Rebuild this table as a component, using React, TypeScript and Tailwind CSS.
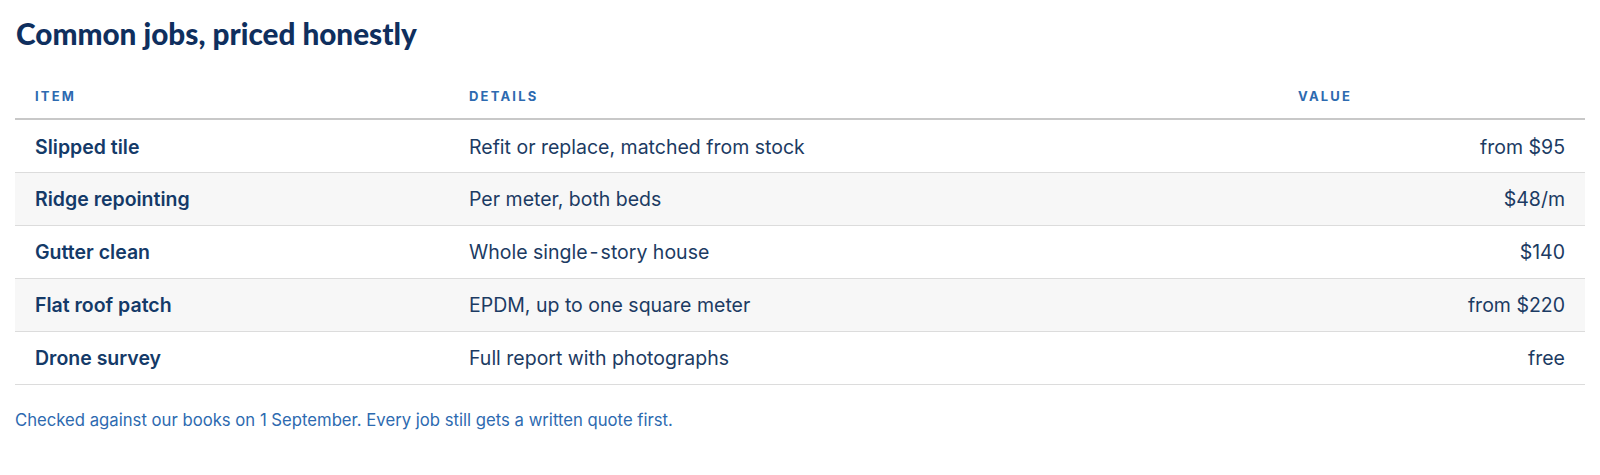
import React from "react";

const rows: { item: string; details: React.ReactNode; value: string }[] = [
  { item: "Slipped tile", details: "Refit or replace, matched from stock", value: "from $95" },
  { item: "Ridge repointing", details: "Per meter, both beds", value: "$48/m" },
  {
    item: "Gutter clean",
    details: (
      <>
        Whole single<span className="px-[3px]">{"\u2011"}</span>story house
      </>
    ),
    value: "$140",
  },
  { item: "Flat roof patch", details: "EPDM, up to one square meter", value: "from $220" },
  { item: "Drone survey", details: "Full report with photographs", value: "free" },
];

export default function App() {
  return (
    <div className="bg-white w-[1600px] h-[475px] px-[15px] pt-[16px] font-['Inter',sans-serif]">
      <h2 className="font-['Lato','Noto_Sans',sans-serif] font-black text-[29.7px] leading-[36px] text-[#0f2f5e] pl-[1px]">
        Common jobs, priced honestly
      </h2>
      <table className="w-full mt-[36px] border-collapse table-fixed">
        <colgroup>
          <col className="w-[434px]" />
          <col className="w-[829px]" />
          <col className="w-[307px]" />
        </colgroup>
        <thead>
          <tr className="border-b-2 border-[#c8c8c8]">
            <th className="text-left px-5 pb-[14px] text-[13px] leading-[16px] font-bold tracking-[0.17em] text-[#2d6ab0]">ITEM</th>
            <th className="text-left px-5 pb-[14px] text-[13px] leading-[16px] font-bold tracking-[0.17em] text-[#2d6ab0]">DETAILS</th>
            <th className="text-left px-5 pb-[14px] text-[13px] leading-[16px] font-bold tracking-[0.17em] text-[#2d6ab0]">VALUE</th>
          </tr>
        </thead>
        <tbody>
          {rows.map((r, i) => (
            <tr key={r.item} className={`border-b border-[#dcdcdc] ${i % 2 === 1 ? "bg-[#f7f7f7]" : "bg-white"}`}>
              <td className="px-5 pt-[3px] h-[53px] text-[19.5px] font-semibold text-[#143a68]">{r.item}</td>
              <td className="px-5 pt-[3px] h-[53px] text-[19.5px] text-[#1c3b63]">{r.details}</td>
              <td className="px-5 pt-[3px] h-[53px] text-[19.5px] text-[#1c3b63] text-right">{r.value}</td>
            </tr>
          ))}
        </tbody>
      </table>
      <p className="mt-[23px] text-[16.7px] leading-[24px] text-[#2d6ab0]">
        Checked against our books on 1 September. Every job still gets a written quote first.
      </p>
    </div>
  );
}
